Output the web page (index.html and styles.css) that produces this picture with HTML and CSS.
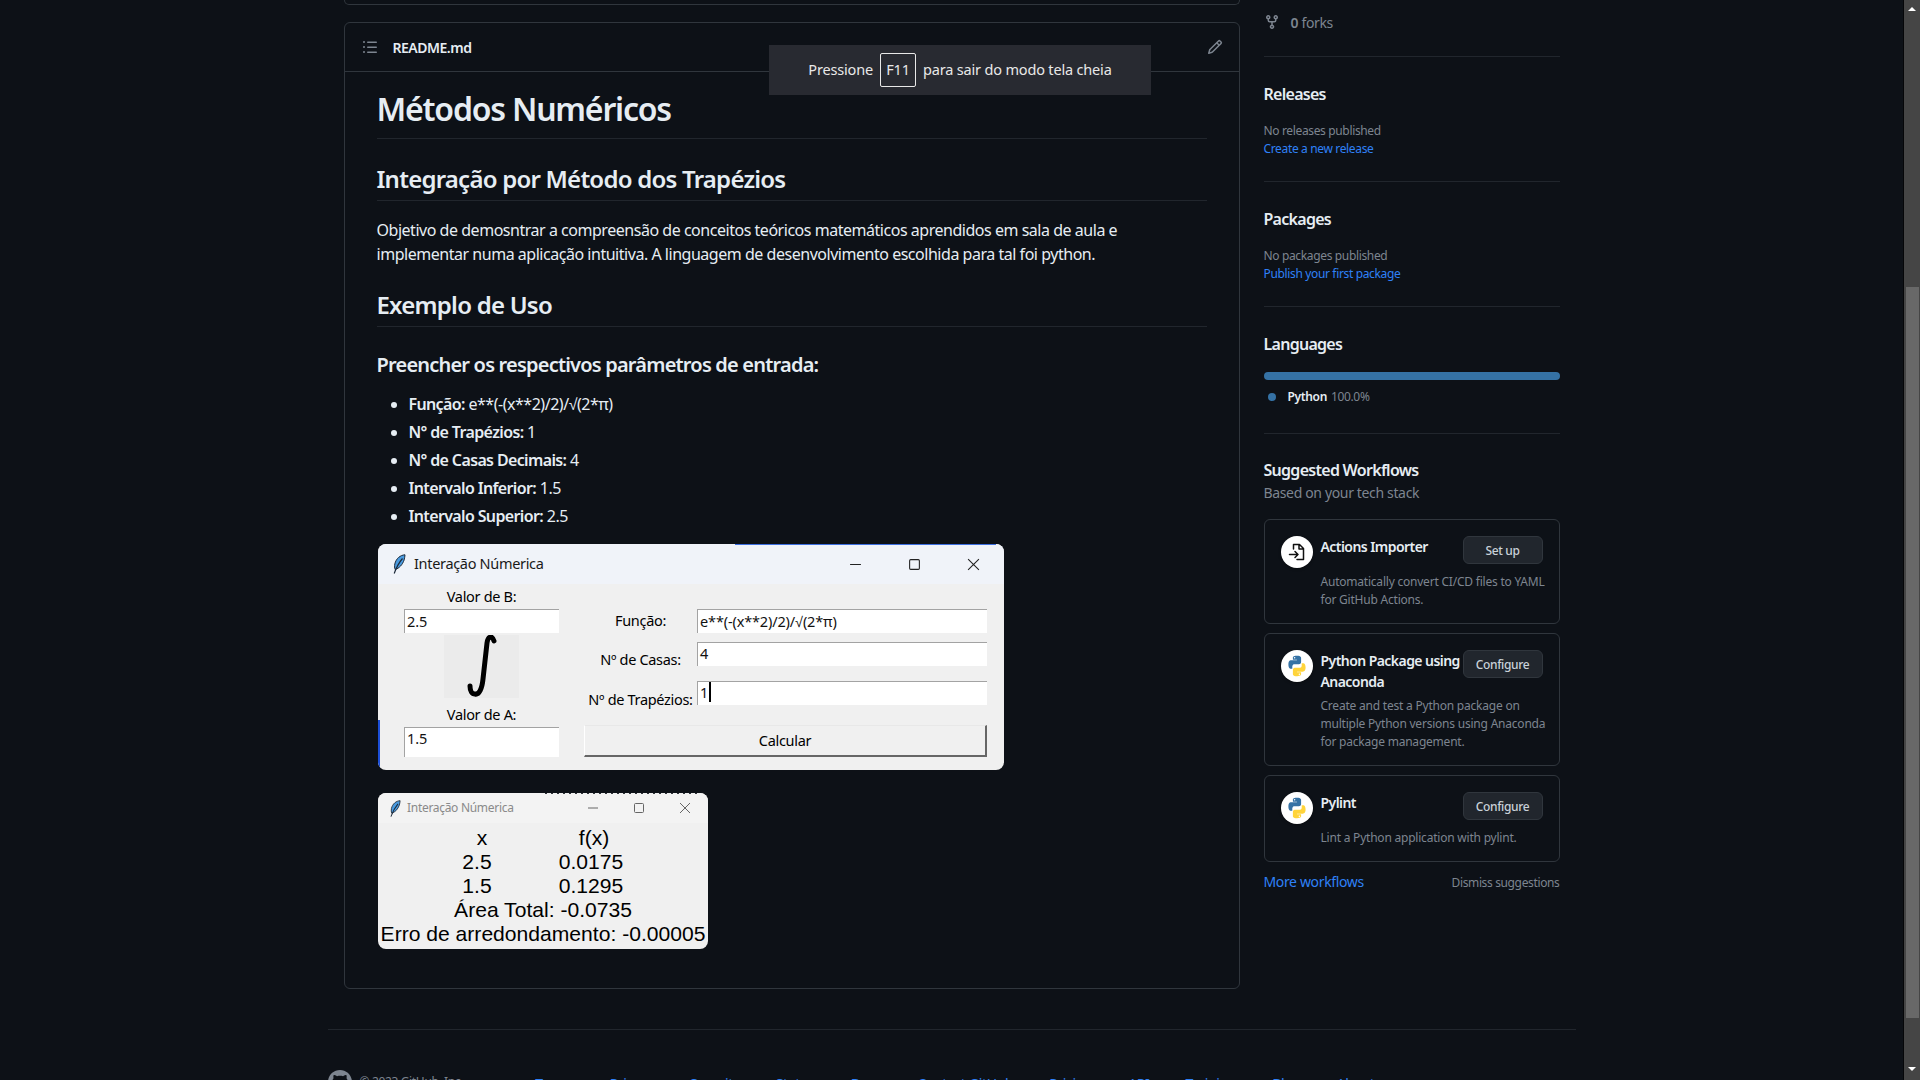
FILE: index.html
```html
<!DOCTYPE html>
<html lang="pt">
<head>
<meta charset="utf-8">
<title>README</title>
<link rel="stylesheet" href="styles.css">
</head>
<body>
<svg class="defs" width="0" height="0" aria-hidden="true">
  <symbol id="py" viewBox="0 0 24 24">
    <path fill="#3572a5" d="M11.900 1.800C7.600 1.800 7.900 3.700 7.900 3.700v2h4.100v.6H6.200s-2.800-.3-2.800 4.100 2.400 4.300 2.400 4.300h1.500v-2.100s-.1-2.400 2.400-2.400h4.100s2.300 0 2.300-2.200V4.100s.4-2.300-4.200-2.300zM9.600 3.100a.75.75 0 110 1.500.75.75 0 010-1.500z"/>
    <path fill="#ffd43b" d="M12.100 22.200c4.300 0 4-1.900 4-1.900v-2H12v-.6h5.800s2.800.3 2.800-4.100-2.400-4.300-2.400-4.300h-1.500v2.100s.1 2.400-2.400 2.400H10.200s-2.300 0-2.300 2.200v3.900s-.4 2.300 4.200 2.300zm2.300-1.300a.75.75 0 110-1.500.75.75 0 010 1.500z"/>
  </symbol>
  <symbol id="feather" viewBox="0 0 14 20">
    <path fill="#4a9be0" stroke="#1d2a3a" stroke-width="1" d="M13 .8C8.500 1 4 4.500 2.800 10c-.4 2-.3 4 .3 5.500 4-1 7.500-5 9-9.500.5-1.700.8-3.800.9-5.200z"/>
    <path fill="none" stroke="#1d2a3a" stroke-width="1.200" d="M10.500 4.500C7.500 8 4.500 13 2.200 19.500"/>
  </symbol>
</svg>

<div class="page">
  <div class="container">
    <div class="layout">
      <main class="main">
        <div class="prev-box"></div>
        <section class="readme">
          <header class="readme-head">
            <svg class="oct muted-icon" viewBox="0 0 16 16"><path d="M5.750 2.500h8.500a.750.750 0 0 1 0 1.500h-8.500a.750.750 0 0 1 0-1.500Zm0 5h8.500a.750.750 0 0 1 0 1.500h-8.500a.750.750 0 0 1 0-1.500Zm0 5h8.500a.750.750 0 0 1 0 1.500h-8.500a.750.750 0 0 1 0-1.500ZM2 14a1 1 0 1 1 0-2 1 1 0 0 1 0 2Zm1-6a1 1 0 1 1-2 0 1 1 0 0 1 2 0ZM2 4a1 1 0 1 1 0-2 1 1 0 0 1 0 2Z"/></svg>
            <span class="readme-name">README.md</span>
            <svg class="oct muted-icon pencil" viewBox="0 0 16 16"><path d="M11.013 1.427a1.750 1.750 0 0 1 2.474 0l1.086 1.086a1.750 1.750 0 0 1 0 2.474l-8.610 8.610c-.210.210-.470.364-.756.445l-3.251.930a.750.750 0 0 1-.927-.928l.929-3.250c.081-.286.235-.547.445-.758l8.610-8.610Zm.176 4.823L9.750 4.810l-6.286 6.287a.253.253 0 0 0-.064.108l-.558 1.953 1.953-.558a.253.253 0 0 0 .108-.064Zm1.238-3.763a.250.250 0 0 0-.354 0L10.811 3.750l1.439 1.440 1.263-1.263a.250.250 0 0 0 0-.354Z"/></svg>
          </header>
          <article class="article">
            <h1>Métodos Numéricos</h1>
            <h2>Integração por Método dos Trapézios</h2>
            <p>Objetivo de demosntrar a compreensão de conceitos teóricos matemáticos aprendidos em sala de aula e implementar numa aplicação intuitiva. A linguagem de desenvolvimento escolhida para tal foi python.</p>
            <h2>Exemplo de Uso</h2>
            <h3>Preencher os respectivos parâmetros de entrada:</h3>
            <ul>
              <li><b>Função:</b> e**(-(x**2)/2)/√(2*π)</li>
              <li><b>N° de Trapézios:</b> 1</li>
              <li><b>N° de Casas Decimais:</b> 4</li>
              <li><b>Intervalo Inferior:</b> 1.5</li>
              <li><b>Intervalo Superior:</b> 2.5</li>
            </ul>

            <div class="win win-input">
              <div class="win-title">
                <svg class="feather"><use href="#feather"/></svg>
                <span class="win-name">Interação Númerica</span>
                <div class="win-ctrls">
                  <svg viewBox="0 0 12 12"><path d="M1 6h10"/></svg>
                  <svg viewBox="0 0 12 12"><rect x="1.500" y="1.500" width="9" height="9" rx="1"/></svg>
                  <svg viewBox="0 0 12 12"><path d="M1 1l10 10M11 1L1 11"/></svg>
                </div>
              </div>
              <div class="win-body">
                <div class="col-left">
                  <div class="lbl lbl-b">Valor de B:</div>
                  <div class="entry">2.5</div>
                  <svg class="integral" viewBox="0 0 75 63"><path d="M50 6C48 0 44 1 43 8L39 44C38 54 35 60 31 59C28 59 26 56 26 51"/></svg>
                  <div class="lbl lbl-a">Valor de A:</div>
                  <div class="entry entry-tall">1.5</div>
                </div>
                <div class="col-right">
                  <div class="row"><div class="lbl">Função:</div><div class="entry">e**(-(x**2)/2)/√(2*π)</div></div>
                  <div class="row row-2"><div class="lbl lbl-low">Nº de Casas:</div><div class="entry">4</div></div>
                  <div class="row row-3"><div class="lbl lbl-lower">Nº de Trapézios:</div><div class="entry"><span class="caret">1</span></div></div>
                  <div class="calc">Calcular</div>
                </div>
              </div>
            </div>

            <div class="win win-result">
              <div class="win-title">
                <svg class="feather"><use href="#feather"/></svg>
                <span class="win-name">Interação Númerica</span>
                <div class="win-ctrls">
                  <svg viewBox="0 0 12 12"><path d="M1 6h10"/></svg>
                  <svg viewBox="0 0 12 12"><rect x="1.500" y="1.500" width="9" height="9" rx="1"/></svg>
                  <svg viewBox="0 0 12 12"><path d="M1 1l10 10M11 1L1 11"/></svg>
                </div>
              </div>
              <div class="result-body">
                <div class="res-row"><span class="res-x">x</span><span class="res-f">f(x)</span></div>
                <div class="res-row"><span>2.5</span><span>0.0175</span></div>
                <div class="res-row"><span>1.5</span><span>0.1295</span></div>
                <div>Área Total: -0.0735</div>
                <div>Erro de arredondamento: -0.00005</div>
              </div>
            </div>
          </article>
        </section>
      </main>

      <aside class="side">
        <div class="forks">
          <svg class="oct muted-icon" viewBox="0 0 16 16"><path d="M5 5.372v.878c0 .414.336.750.750.750h4.500a.750.750 0 0 0 .750-.750v-.878a2.250 2.250 0 1 1 1.500 0v.878a2.250 2.250 0 0 1-2.250 2.250h-1.500v2.128a2.251 2.251 0 1 1-1.500 0V8.500h-1.500A2.250 2.250 0 0 1 3.500 6.250v-.878a2.250 2.250 0 1 1 1.500 0ZM5 3.250a.750.750 0 1 0-1.500 0 .750.750 0 0 0 1.500 0Zm6.750.750a.750.750 0 1 0 0-1.500.750.750 0 0 0 0 1.500Zm-3 8.750a.750.750 0 1 0-1.500 0 .750.750 0 0 0 1.500 0Z"/></svg>
          <span><b class="count">0</b> forks</span>
        </div>
        <section class="side-sec">
          <h4>Releases</h4>
          <div class="small muted first">No releases published</div>
          <a class="small link">Create a new release</a>
        </section>
        <section class="side-sec">
          <h4>Packages</h4>
          <div class="small muted first">No packages published</div>
          <a class="small link">Publish your first package</a>
        </section>
        <section class="side-sec lang">
          <h4>Languages</h4>
          <div class="bar"></div>
          <div class="lang-item"><i class="dot"></i><b>Python</b><span class="muted">100.0%</span></div>
        </section>
        <section class="side-sec wf">
          <h4>Suggested Workflows</h4>
          <div class="based muted">Based on your tech stack</div>
          <div class="wf-card">
            <div class="wf-top">
              <span class="wf-icon"><svg viewBox="0 0 24 24" class="imp"><path d="M8.500 9V4.500h6L18.500 8.500V19.500H12M14 4.500V9h4.500M4.500 14.500H13M10 11.500l3 3-3 3"/></svg></span>
              <span class="wf-title">Actions Importer</span>
              <span class="btn">Set up</span>
            </div>
            <p class="wf-desc">Automatically convert CI/CD files to YAML for GitHub Actions.</p>
          </div>
          <div class="wf-card">
            <div class="wf-top">
              <span class="wf-icon"><svg viewBox="0 0 24 24"><use href="#py"/></svg></span>
              <span class="wf-title">Python Package using Anaconda</span>
              <span class="btn">Configure</span>
            </div>
            <p class="wf-desc">Create and test a Python package on multiple Python versions using Anaconda for package management.</p>
          </div>
          <div class="wf-card">
            <div class="wf-top">
              <span class="wf-icon"><svg viewBox="0 0 24 24"><use href="#py"/></svg></span>
              <span class="wf-title">Pylint</span>
              <span class="btn">Configure</span>
            </div>
            <p class="wf-desc">Lint a Python application with pylint.</p>
          </div>
          <div class="wf-foot">
            <a class="link more">More workflows</a>
            <span class="small muted dismiss">Dismiss suggestions</span>
          </div>
        </section>
      </aside>
    </div>

    <footer class="footer">
      <svg class="gh" viewBox="0 0 16 16"><path d="M8 0c4.420 0 8 3.580 8 8a8.013 8.013 0 0 1-5.450 7.590c-.400.080-.550-.170-.550-.380 0-.270.010-1.130.010-2.200 0-.750-.250-1.230-.540-1.480 1.780-.200 3.650-.880 3.650-3.950 0-.880-.310-1.590-.820-2.150.080-.200.360-1.020-.080-2.120 0 0-.670-.220-2.200.820-.640-.180-1.320-.270-2-.270-.680 0-1.360.090-2 .270-1.530-1.030-2.200-.820-2.200-.820-.440 1.100-.160 1.920-.080 2.120-.510.560-.820 1.280-.820 2.150 0 3.060 1.860 3.750 3.640 3.950-.230.200-.440.550-.510 1.070-.460.210-1.610.550-2.330-.660-.150-.240-.600-.830-1.230-.820-.670.010-.270.380.010.530.340.190.730.900.820 1.130.160.450.680 1.310 2.690.940 0 .670.010 1.300.010 1.490 0 .210-.150.450-.550.380A7.995 7.995 0 0 1 0 8c0-4.420 3.580-8 8-8Z"/></svg>
      <span class="copy muted">© 2023 GitHub, Inc.</span>
      <nav class="foot-links">
        <a class="link">Terms</a><a class="link">Privacy</a><a class="link">Security</a><a class="link">Status</a><a class="link">Docs</a><a class="link">Contact GitHub</a><a class="link">Pricing</a><a class="link">API</a><a class="link">Training</a><a class="link">Blog</a><a class="link">About</a>
      </nav>
    </footer>
  </div>
</div>

<div class="scrollbar">
  <span class="arrow arrow-up"></span>
  <div class="thumb"></div>
  <span class="arrow arrow-down"></span>
</div>

<div class="fs-toast">Pressione <kbd>F11</kbd> para sair do modo tela cheia</div>
</body>
</html>
```

FILE: styles.css
```css
* { box-sizing: border-box; }
html, body { margin: 0; height: 1080px; overflow: hidden; }
body {
  display: flex;
  background: #0d1117;
  color: #c9d1d9;
  font-family: "Noto Sans", sans-serif;
  font-size: 14px;
  letter-spacing: -0.025em;
  line-height: 1.5;
}
.defs { position: absolute; }
.page { flex: 1; min-width: 0; height: 1080px; overflow: hidden; }
.container { width: 1248px; margin: 0 auto; }
.layout { display: flex; gap: 24px; padding: 0 16px; height: 1029px; }
.main { width: 896px; flex: none; }
.prev-box { height: 5px; border: 1px solid #30363d; border-top: 0; border-radius: 0 0 6px 6px; margin-bottom: 17px; }
.readme { border: 1px solid #30363d; border-radius: 6px; height: 967px; }
.readme-head { display: flex; align-items: center; height: 49px; padding-left: 17px; border-bottom: 1px solid #30363d; }
.oct { width: 16px; height: 16px; flex: none; }
.muted-icon { fill: #7d8590; }
.readme-name { margin-left: 15px; font-weight: 600; color: #e6edf3; letter-spacing: -0.035em; }
.pencil { margin-left: auto; margin-right: 16px; }
.article { padding: 17px 32px 0; font-size: 16px; letter-spacing: -0.0295em; }
h1, h2, h3, h4 { margin: 0; font-weight: 600; color: #e6edf3; }
h1 { font-size: 32px; line-height: 40px; padding-bottom: 9px; border-bottom: 1px solid #21262d; letter-spacing: -0.0375em; }
h2 { font-size: 24px; line-height: 30px; margin-top: 25px; padding-bottom: 6px; border-bottom: 1px solid #21262d; letter-spacing: -0.032em; }
h3 { font-size: 20px; line-height: 25px; margin-top: 25px; letter-spacing: -0.04em; }
.article p { margin: 17px 0 0; line-height: 24px; color: #e6edf3; }
.article p + h2 { margin-top: 24px; }
ul { margin: 15px 0 0; padding-left: 32px; color: #e6edf3; }
li { line-height: 24px; margin-bottom: 4px; }
li b { font-weight: 600; letter-spacing: -0.04em; }

.win { position: relative; color: #000; background: #f0f0f0; overflow: hidden; margin-left: 1.5px; letter-spacing: -0.02em; }
.win-input { width: 626px; height: 226px; margin-top: 16px; border-radius: 8px; }
.win-input::before { content: ""; position: absolute; left: 0; bottom: 0; width: 2px; height: 50px; background: #1c4fd8; }
.win-input::after { content: ""; position: absolute; left: 357px; top: 0; right: 8px; height: 1px; background: #3d6fe0; }
.win-result { width: 330px; height: 156px; margin-top: 23px; border-radius: 8px; }
.win-result::before { content: ""; position: absolute; left: 163px; top: 0; right: 8px; height: 1px; background: repeating-linear-gradient(90deg, #f0f0f0 0 4px, #30343a 4px 6px); }
.win-title { display: flex; align-items: center; background: #f0f3f9; height: 40px; padding-left: 14px; }
.feather { width: 14px; height: 20px; flex: none; }
.win-name { margin-left: 8px; font-size: 14.500px; line-height: 18px; padding-bottom: 2px; color: #1a1a1a; }
.win-ctrls { margin-left: auto; display: flex; align-items: center; }
.win-ctrls svg { width: 12px; height: 12px; fill: none; stroke: #222; stroke-width: 1; }
.win-input .win-ctrls { gap: 46px; padding-right: 24px; }
.win-input .win-ctrls svg { width: 13px; height: 13px; }
.win-body { display: flex; gap: 25px; padding-left: 26px; }
.col-left { width: 155px; flex: none; display: flex; flex-direction: column; align-items: center; }
.lbl { font-size: 14.500px; line-height: 22px; text-align: center; white-space: nowrap; }
.lbl-b { margin-top: 1px; height: 22px; }
.entry { width: 100%; height: 24px; flex: none; background: #fff; border-top: 1px solid #a3a3a3; border-left: 1px solid #a3a3a3; font-size: 14.500px; line-height: 22px; letter-spacing: -0.01em; padding-left: 2px; color: #111; white-space: nowrap; }
.col-left .entry { margin-top: 2px; }
.col-left .entry-tall { height: 30px; margin-top: 2px; line-height: 20px; }
.integral { width: 75px; height: 63px; margin-top: 2px; background: #ebebeb; fill: none; stroke: #000; stroke-width: 5; stroke-linecap: round; }
.lbl-a { margin-top: 5px; }
.col-right { width: 403px; padding-top: 25px; }
.row { display: flex; height: 24px; }
.row .lbl { width: 113px; flex: none; line-height: 22px; }
.row .entry { width: 290px; }
.row-2 { margin-top: 9px; }
.row-3 { margin-top: 15px; }
.row-2 .entry, .row-3 .entry { line-height: 20px; }
.lbl-low { margin-top: 6px; }
.lbl-lower { margin-top: 7px; }
.caret { border-right: 2px solid #000; padding-right: 1px; }
.calc { height: 32px; margin-top: 20px; background: #f0f0f0; border: 1px solid #fff; border-right: 2px solid #666; border-bottom: 2px solid #666; border-top-color: #e8e8e8; font-size: 14.500px; line-height: 29px; text-align: center; }

.win-result .win-title { background: #f3f3f3; height: 30px; padding-left: 11px; }
.win-result .win-name { font-size: 12px; color: #8a8a8a; margin-left: 6px; letter-spacing: -0.025em; padding-bottom: 0; }
.win-result .feather { width: 12px; height: 17px; }
.win-result .win-ctrls { gap: 34px; padding-right: 17px; }
.win-result .win-ctrls svg { stroke: #666; }
.result-body { padding-top: 3px; font-family: "Liberation Sans", Arial, sans-serif; font-size: 21.100px; line-height: 24px; letter-spacing: 0; text-align: center; color: #000; }
.res-row { display: grid; grid-template-columns: 100px 100px; column-gap: 14px; justify-content: center; padding-right: 18px; }
.res-x { padding-left: 10px; }
.res-f { padding-left: 6px; }

.side { width: 296px; flex: none; }
.forks { display: flex; align-items: center; gap: 8px; height: 22px; margin-top: 11px; color: #7d8590; }
.forks .count { font-weight: 600; color: #7d8590; }
.forks span { margin-left: 3px; }
.side-sec { border-top: 1px solid #21262d; margin-top: 22px; padding-top: 25px; height: 125px; }
.forks + .side-sec { margin-top: 23px; }
.side-sec + .side-sec { margin-top: 0; }
h4 { font-size: 16px; line-height: 24px; letter-spacing: -0.045em; }
.small { font-size: 12px; line-height: 18px; display: block; }
.muted { color: #7d8590; }
.link { color: #2f81f7; }
.first { margin-top: 16px; }
.side-sec .link.small { margin-top: 0; }
.lang { height: 127px; }
.bar { height: 8px; margin-top: 16px; border-radius: 4px; background: #3572a5; }
.lang-item { display: flex; align-items: center; font-size: 12px; line-height: 18px; margin-top: 8px; padding-left: 4px; }
.dot { width: 8px; height: 8px; border-radius: 50%; background: #3572a5; margin-right: 12px; }
.lang-item b { font-weight: 600; color: #e6edf3; margin-right: 4px; }
.wf { height: auto; padding-top: 24px; }
.based { font-size: 14px; line-height: 20px; margin-top: 1px; margin-bottom: 16px; }
.wf-card { border: 1px solid #30363d; border-radius: 6px; padding: 16px 16px 14px; margin-bottom: 9px; }
.wf-top { display: flex; align-items: flex-start; }
.wf-icon { width: 32px; height: 32px; flex: none; border-radius: 50%; background: #fff; display: flex; align-items: center; justify-content: center; box-shadow: 0 1px 3px rgba(0,0,0,.4); }
.wf-icon svg { width: 24px; height: 24px; }
.imp { fill: none; stroke: #111; stroke-width: 1.500; stroke-linecap: round; stroke-linejoin: round; }
.wf-title { flex: 1; min-width: 0; margin-left: 8px; font-weight: 600; line-height: 21px; color: #e6edf3; letter-spacing: -0.04em; }
.btn { flex: none; width: 80px; height: 28px; margin-left: -2px; border: 1px solid #30363d; border-radius: 6px; background: #21262d; font-size: 12px; font-weight: 500; line-height: 27px; text-align: center; color: #c9d1d9; }
.wf-desc { margin: 5px -6px 0 40px; font-size: 12px; line-height: 18px; color: #7d8590; letter-spacing: -0.018em; }
.wf-foot { display: flex; justify-content: space-between; align-items: center; height: 21px; }
.more { font-size: 14px; }
.dismiss { padding-top: 2px; letter-spacing: -0.03em; }

.footer { display: flex; align-items: flex-start; border-top: 1px solid #21262d; padding-top: 40px; }
.gh { width: 24px; height: 24px; flex: none; fill: #7d8590; }
.copy { margin-left: 8px; font-size: 12px; margin-top: 3px; white-space: nowrap; }
.foot-links { display: flex; gap: 36px; margin-left: 72px; margin-top: 3px; font-size: 14px; white-space: nowrap; }

.scrollbar { width: 17px; height: 1080px; flex: none; display: flex; flex-direction: column; align-items: center; background: #454545; border-left: 1px solid #050608; }
.arrow { width: 0; height: 0; border-left: 4px solid transparent; border-right: 4px solid transparent; flex: none; }
.arrow-up { border-bottom: 4px solid #fff; margin-top: 7px; }
.arrow-down { border-top: 4px solid #fff; margin-top: 49px; }
.thumb { width: 13px; height: 731px; margin-top: 276px; background: #686868; flex: none; }

.fs-toast { position: absolute; left: 769px; top: 45px; width: 382px; height: 50px; display: flex; align-items: center; justify-content: center; gap: 7px; padding-bottom: 1px; background: #282a31; color: #e8e8e8; font-size: 14.500px; letter-spacing: -0.012em; }
.fs-toast kbd { width: 36px; height: 34px; display: flex; align-items: center; justify-content: center; font: inherit; border: 1px solid #e8e8e8; border-radius: 2px; }
```
